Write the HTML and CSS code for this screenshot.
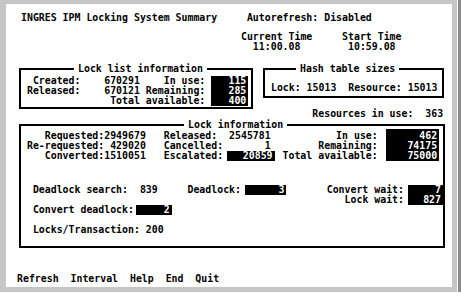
FILE: index.html
```html
<!DOCTYPE html>
<html lang="en">
<head>
    <meta charset="UTF-8">
    <meta name="viewport" content="width=device-width, initial-scale=1.0">
    <title>INGRES IPM Locking System Summary</title>
    <link rel="stylesheet" href="styles.css">
</head>
<body>

    <div class="window">
        <div class="frame">
            <div class="screen">
                <div class="line head">INGRES IPM Locking System Summary     Autorefresh: Disabled</div>

                <div class="times">
                    <div class="line">                                     Current Time     Start Time</div>
                    <div class="line">                                       11:00.08        10:59.08</div>
                </div>

                <div class="boxes">
                    <fieldset class="box locklist">
                        <legend>Lock list information</legend>
                        <div class="cols">
                            <div class="text">
                                <div class="line">  Created:    670291    In use:</div>
                                <div class="line"> Released:    670121 Remaining:</div>
                                <div class="line">               Total available:</div>
                            </div>
                            <div class="inv stack list-vals">
                                <div class="line">115</div>
                                <div class="line">285</div>
                                <div class="line">400</div>
                            </div>
                        </div>
                    </fieldset>

                    <fieldset class="box hash">
                        <legend>Hash table sizes</legend>
                        <div class="line"> Lock: 15013  Resource: 15013</div>
                    </fieldset>
                </div>

                <div class="line resources">                                                 Resources in use:  363</div>

                <fieldset class="box lockinfo">
                    <legend>Lock information</legend>
                    <div class="cols">
                        <div class="text">
                            <div class="line">    Requested:2949679   Released:  2545781           In use:</div>
                            <div class="line"> Re-requested: 429020   Cancelled:       1        Remaining:</div>
                            <div class="line">    Converted:1510051   Escalated:<span class="inv esc">20859</span><span class="total">Total available:</span></div>
                        </div>
                        <div class="inv stack info-vals">
                            <div class="line">462</div>
                            <div class="line">74175</div>
                            <div class="line">75000</div>
                        </div>
                    </div>

                    <div class="lower">
                        <div class="text">
                            <div class="line">  Deadlock search:  839     Deadlock:<span class="inv deadlock">3</span></div>
                            <div class="line"> </div>
                            <div class="line">  Convert deadlock:<span class="inv convert">2</span></div>
                            <div class="line"> </div>
                            <div class="line">  Locks/Transaction: 200</div>
                        </div>
                        <div class="waits">
                            <div class="text labels">
                                <div class="line">Convert wait:</div>
                                <div class="line">Lock wait:</div>
                            </div>
                            <div class="inv stack wait-vals">
                                <div class="line">7</div>
                                <div class="line">827</div>
                            </div>
                        </div>
                    </div>
                </fieldset>

                <div class="line menu">Refresh  Interval  Help  End  Quit</div>
            </div>
        </div>
    </div>

</body>
</html>
```

FILE: styles.css
```css
/* Terminal style screen */
body {
    margin: 0;
    background-color: #ffffff;
}
.window {
    display: inline-block;
    padding-right: 1px;
    border-right: 3px solid #8c8c8c;
}
.frame {
    width: 446px;
    height: 283px;
    border-style: solid;
    border-color: #c6c6c6;
    border-width: 4px 5px 5px 6px;
    background-color: #ffffff;
}
.screen {
    height: 283px;
    box-sizing: border-box;
    padding: 8.5px 0 0 15px;
    font-family: "DejaVu Sans Mono", "Liberation Mono", monospace;
    font-weight: bold;
    font-size: 9.9px;
    line-height: 10px;
    color: #000;
}
.line {
    white-space: pre;
    height: 10px;
}
.times {
    margin-top: 9px;
}

/* boxes with a title in the top border */
.box {
    margin: 0;
    padding: 0;
    border: 2px solid #000;
    min-width: 0;
}
.box legend {
    padding: 0 4px;
    white-space: pre;
    line-height: 10px;
}
.boxes {
    display: flex;
    align-items: flex-start;
    margin-top: 12px;
}
.locklist {
    width: 230px;
    margin-left: -2px;
    padding: 2.5px 0 1px;
}
.locklist legend { margin-left: 53px; }
.hash {
    width: 177px;
    margin-left: 10px;
    padding: 9px 0 3px;
}
.hash legend { margin-left: 31px; }

.cols {
    display: flex;
    align-items: flex-start;
}
.inv {
    background-color: #000;
    color: #fff;
    text-align: right;
}
.stack {
    box-sizing: border-box;
    padding-right: 2px;
}
.list-vals {
    width: 37px;
    margin-left: 6px;
}

.lockinfo {
    width: 422px;
    margin: 1px 0 0 -2px;
    padding: 1px 0 11.5px;
}
.lockinfo legend { margin-left: 163px; }
.esc {
    display: inline-block;
    width: 48px;
    margin-left: 3.4px;
    padding-right: 2px;
    box-sizing: border-box;
}
.total {
    margin-left: 8px;
}
.info-vals {
    width: 53px;
    margin-left: 8.4px;
    margin-top: -2px;
    padding-top: 2px;
}

.lower {
    display: flex;
    align-items: flex-start;
    margin-top: 23.5px;
}
.deadlock {
    display: inline-block;
    width: 41px;
    margin-left: 4.5px;
    padding-right: 2px;
    box-sizing: border-box;
}
.convert {
    display: inline-block;
    width: 36px;
    margin-left: 1.8px;
    padding-right: 2px;
    box-sizing: border-box;
}
.waits {
    display: flex;
    align-items: flex-start;
    margin-left: auto;
}
.labels {
    text-align: right;
}
.wait-vals {
    width: 35px;
    margin-left: 4px;
}

.menu {
    margin: 25.5px 0 0 -4px;
}
```
